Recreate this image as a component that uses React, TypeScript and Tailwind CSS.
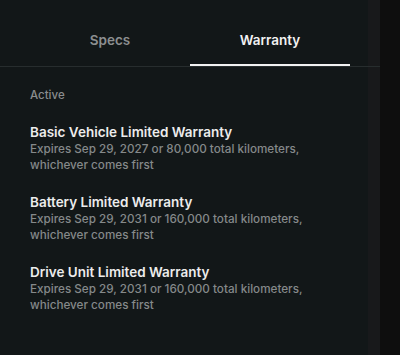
const warranties = [
  {
    title: "Basic Vehicle Limited Warranty",
    detail: "Expires Sep 29, 2027 or 80,000 total kilometers, whichever comes first",
  },
  {
    title: "Battery Limited Warranty",
    detail: "Expires Sep 29, 2031 or 160,000 total kilometers, whichever comes first",
  },
  {
    title: "Drive Unit Limited Warranty",
    detail: "Expires Sep 29, 2031 or 160,000 total kilometers, whichever comes first",
  },
];

function Tab({ label, active }: { label: string; active?: boolean }) {
  return (
    <button
      className={
        active
          ? "flex-1 border-b-2 border-[#f2f2f2] pt-[30px] pb-[14px] text-[13.5px] leading-[20px] font-semibold text-[#f2f2f2]"
          : "flex-1 pt-[30px] pb-[16px] text-[13.5px] leading-[20px] font-semibold text-[#8c8f90]"
      }
    >
      {label}
    </button>
  );
}

export default function App() {
  return (
    <div className="flex h-[355px] w-[400px] bg-[#0e0e0e]" style={{ fontFamily: "Inter, 'Noto Sans', sans-serif" }}>
      <div className="flex w-[380px] flex-col bg-[linear-gradient(to_right,#121718_368px,#18191b_368px)]">
        <div className="flex px-[30px]">
          <Tab label="Specs" />
          <Tab label="Warranty" active />
        </div>
        <div className="h-px bg-[#272d2e]" />
        <div className="px-[30px] pt-[20px]">
          <p className="text-[11.5px] leading-[16px] font-medium text-[#8a8d8e]">Active</p>
          <div className="mt-[19px] flex flex-col gap-[19px]">
            {warranties.map((w) => (
              <div key={w.title}>
                <h3 className="text-[13.5px] leading-[20px] font-semibold text-[#ececec]">{w.title}</h3>
                <p className="w-[300px] text-[11.7px] leading-[15.5px] font-medium text-[#85898a]">{w.detail}</p>
              </div>
            ))}
          </div>
        </div>
      </div>
    </div>
  );
}
